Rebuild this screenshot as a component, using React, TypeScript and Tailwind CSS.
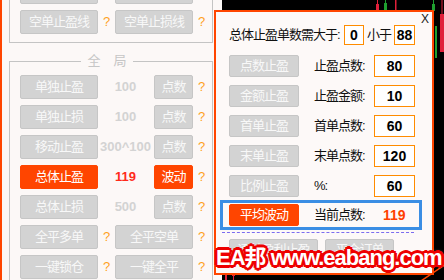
import React from 'react';

const font = "font-['Liberation_Sans','Noto_Sans_CJK_SC',sans-serif]";

function Btn({ children, className = '', active = false }: { children: React.ReactNode; className?: string; active?: boolean }) {
  return (
    <div
      className={`flex shrink-0 items-center justify-center rounded-[2px] border text-[13px] tracking-[-1px] ${
        active ? 'border-[#ff4500] bg-[#ff4500] text-white' : 'border-[#c6c6c6] bg-[#d3d3d3] text-[#f8f8f8]'
      } ${className}`}
    >
      {children}
    </div>
  );
}

function Q() {
  return <span className="w-[17px] shrink-0 text-center text-[13px] text-[#ffa21f]">?</span>;
}

function Box({ children, className = '' }: { children: React.ReactNode; className?: string }) {
  return (
    <div className={`flex shrink-0 items-center justify-center border border-[#ff8c00] bg-white text-[14px] font-bold text-black ${className}`}>
      {children}
    </div>
  );
}

function DoubleRow({ a, b }: { a: string; b: string }) {
  return (
    <div className="flex h-[24px] items-center">
      <Btn className="h-full w-[78px]">{a}</Btn>
      <Q />
      <Btn className="h-full w-[78px]">{b}</Btn>
      <Q />
    </div>
  );
}

const singleRows = [
  { label: '单独止盈', value: '100', unit: '点数' },
  { label: '单独止损', value: '100', unit: '点数' },
  { label: '移动止盈', value: '300^100', unit: '点数' },
  { label: '总体止盈', value: '119', unit: '波动', active: true },
  { label: '总体止损', value: '500', unit: '点数' },
];

const tpRows = [
  { btn: '点数止盈', label: '止盈点数:', value: '80' },
  { btn: '金额止盈', label: '止盈金额:', value: '10' },
  { btn: '首单止盈', label: '首单点数:', value: '60' },
  { btn: '末单止盈', label: '末单点数:', value: '120' },
  { btn: '比例止盈', label: '%:', value: '60' },
];

function LeftPanel() {
  return (
    <div className="flex h-full w-[222px] shrink-0 flex-col border-l-2 border-[#ff4500] bg-[#fcf8f7]">
      <div className="-mt-[29px] ml-[7px] flex w-[204px] flex-col gap-[6px] border border-[#c4c4c4] px-[10px] pt-[8px] pb-[8px]">
        <DoubleRow a="多单止盈线" b="多单止损线" />
        <DoubleRow a="空单止盈线" b="空单止损线" />
      </div>

      <div className="relative mt-[18px] ml-[7px] flex w-[204px] flex-col gap-[6px] border border-[#c4c4c4] px-[10px] pt-[13px] pb-[8px]">
        <div className="absolute -top-[8px] left-[71px] flex w-[52px] justify-center gap-[13px] bg-[#fcf8f7] text-[13px] leading-[14px] text-[#c6c6c6]">
          <span>全</span>
          <span>局</span>
        </div>
        {singleRows.map((r) => (
          <div key={r.label} className="flex h-[24px] items-center">
            <Btn className="h-full w-[78px]" active={r.active}>{r.label}</Btn>
            <span className={`w-[55px] shrink-0 text-center text-[13px] font-bold ${r.active ? 'text-[#ff2a1a]' : 'text-[#d3d3d3]'}`}>
              {r.value}
            </span>
            <Btn className="ml-[1px] h-full w-[39px]" active={r.active}>{r.unit}</Btn>
            <Q />
          </div>
        ))}
        <DoubleRow a="全平多单" b="全平空单" />
        <DoubleRow a="一键锁仓" b="一键全平" />
      </div>
    </div>
  );
}

function Chart() {
  return (
    <div className="relative flex-1 bg-black">
      <svg className="absolute inset-0" width="222" height="280" viewBox="0 0 222 280">
        <rect x="155" y="0" width="1" height="5" fill="#e0203a" />
        <rect x="154" y="4" width="3" height="7" fill="#e0203a" />
        <rect x="163" y="0" width="1" height="10" fill="#1fa02f" />
        <rect x="162" y="3" width="3" height="7" fill="#1fa02f" />
        <rect x="173" y="0" width="1.5" height="10" fill="#e0203a" />
        <rect x="211" y="0" width="1" height="10" fill="#1fa02f" />
        <rect x="210" y="4" width="3" height="7" fill="#1fa02f" />
        <rect x="219.5" y="0" width="1" height="16" fill="#e0203a" />
        <rect x="218" y="14" width="4" height="38" fill="#e0203a" />
        <rect x="213" y="26" width="2" height="32" fill="#1fa02f" />
        <rect x="3" y="275" width="2" height="5" fill="#e0203a" />
        <rect x="10" y="275" width="3" height="1" fill="#e0203a" />
        <rect x="11" y="275" width="1" height="5" fill="#e0203a" />
        <line x1="196" y1="283" x2="224" y2="264" stroke="#ff4500" strokeWidth="1.5" />
      </svg>
    </div>
  );
}

function Popup() {
  return (
    <div className="absolute top-[10px] left-[214px] h-[265px] w-[220px] border-2 border-[#ff4500] bg-[#fdf9f8]">
      <span className="absolute top-0 left-[205px] text-[12px] leading-[14px] text-[#222]">X</span>

      <div className="mt-[13px] flex h-[20px] items-center pl-[13px] text-[13px] tracking-[-1px] text-[#111]">
        <span className="w-[115px] shrink-0">总体止盈单数需大于:</span>
        <Box className="h-[20px] w-[20px] tracking-normal">0</Box>
        <span className="w-[30px] shrink-0 text-center">小于</span>
        <Box className="h-[20px] w-[21px] tracking-normal">88</Box>
      </div>

      <div className="mt-[10px] flex flex-col gap-[8px] pl-[13px]">
        {tpRows.map((r) => (
          <div key={r.btn} className="flex h-[22px] items-center">
            <Btn className="h-full w-[70px]">{r.btn}</Btn>
            <span className="ml-[15px] w-[60px] shrink-0 text-[13px] tracking-[-1px] text-[#111]">{r.label}</span>
            <Box className="h-full w-[41px]">{r.value}</Box>
          </div>
        ))}
      </div>

      <div className="mt-[3px] ml-[4px] flex h-[30px] w-[202px] items-center border-[3px] border-[#3b8ee4] pl-[6px]">
        <Btn className="h-[22px] w-[70px]" active>平均波动</Btn>
        <span className="ml-[15px] w-[69px] shrink-0 text-[13px] tracking-[-1px] text-[#111]">当前点数:</span>
        <span className="text-[14px] font-bold text-[#ff4000]">119</span>
      </div>

      <div className="mt-[2px] ml-[6px] w-[192px] border-t border-dashed border-[#7b6cf0]" />

      <div className="mt-[6px] flex gap-[7px] pl-[13px]">
        <Btn className="h-[22px] w-[89px]">逐单盈利止盈</Btn>
        <Btn className="h-[22px] w-[69px]">平仓订单</Btn>
      </div>
    </div>
  );
}

export default function App() {
  return (
    <div className={`relative flex h-[280px] w-[444px] overflow-hidden ${font}`}>
      <LeftPanel />
      <Chart />
      <Popup />
      <div className="absolute top-[247px] left-[216px] text-[22px] leading-none font-bold tracking-[-1px] whitespace-nowrap text-white [text-shadow:2px_0_#e00,-2px_0_#e00,0_2px_#e00,0_-2px_#e00,2px_2px_#e00,-2px_-2px_#e00,2px_-2px_#e00,-2px_2px_#e00,3px_0_#e00,-3px_0_#e00,0_3px_#e00,0_-3px_#e00,0_0_4px_#fff]">
        EA邦 www.eabang.com
      </div>
    </div>
  );
}
